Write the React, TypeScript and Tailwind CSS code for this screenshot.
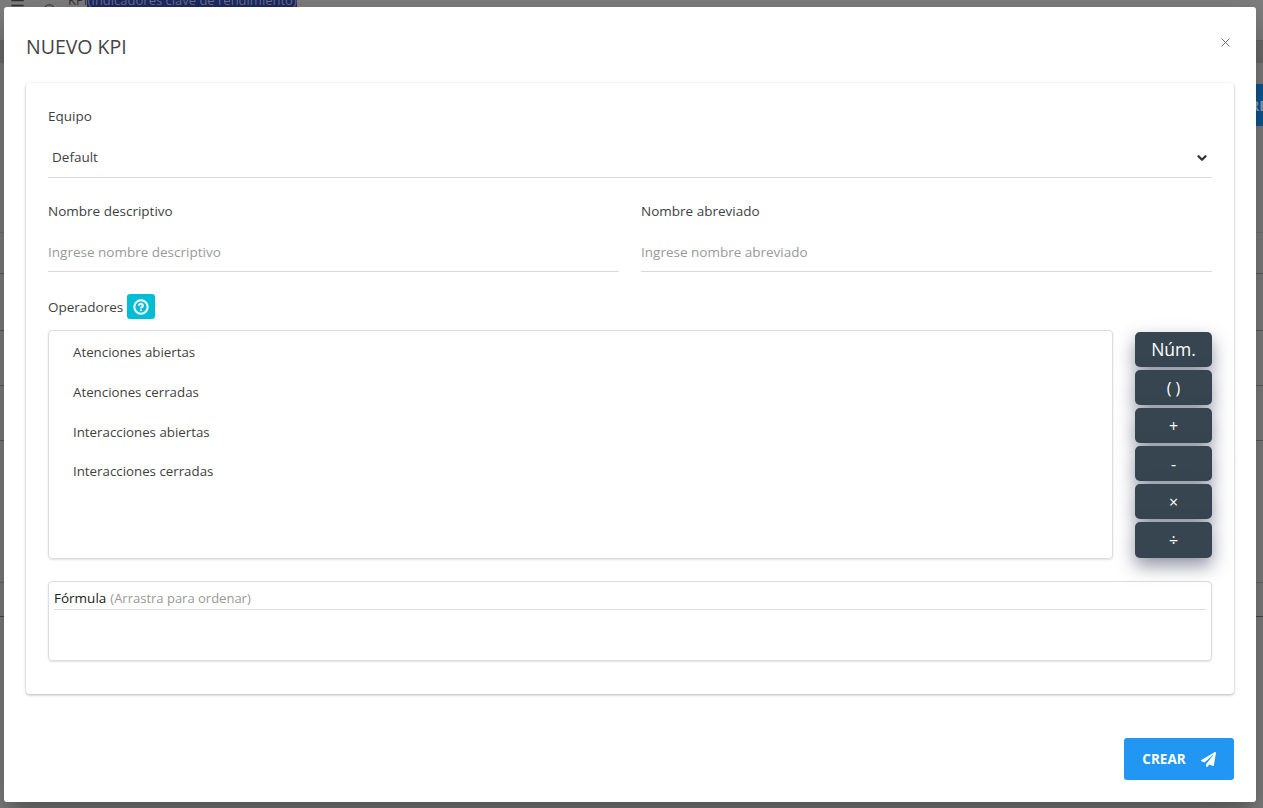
import { ChevronDown, CircleHelp, Menu, Search, X } from "lucide-react"
import { FaPaperPlane } from "react-icons/fa"

const operators = [
  "Atenciones abiertas",
  "Atenciones cerradas",
  "Interacciones abiertas",
  "Interacciones cerradas",
]

const keys = [
  { label: "Núm.", size: "text-[17.5px]", height: "h-[35px]" },
  { label: "( )", size: "text-[16px]", height: "h-[35px]" },
  { label: "+", size: "text-[16px]", height: "h-[35px]" },
  { label: "-", size: "text-[16px]", height: "h-[35px]" },
  { label: "×", size: "text-[16px]", height: "h-[35px]" },
  { label: "÷", size: "text-[16px]", height: "h-[36px]" },
]

const rows = [
  { key: "a", height: "h-[107px]", line: "border-[#757575]" },
  { key: "b", height: "h-[41px]", line: "border-[#5f5f5f]" },
  { key: "c", height: "h-[57px]", line: "border-[#5f5f5f]" },
  { key: "d", height: "h-[55px]", line: "border-[#5f5f5f]" },
  { key: "e", height: "h-[55px]", line: "border-[#5f5f5f]" },
  { key: "f", height: "h-[142px]", line: "border-[#6a6a6a]" },
  { key: "g", height: "h-[34px]", line: "border-[#4a4a4a]" },
]

function Background() {
  return (
    <div className="absolute inset-0 flex flex-col overflow-hidden bg-[#808080]">
      <div className="flex h-[41px] shrink-0 items-start border-b border-[#6a6a6a] pl-[9px] text-[13px] leading-[20px] text-[#333333]">
        <Menu className="-mt-[8px] h-[17px] w-[17px]" />
        <Search className="mt-[3px] ml-[17px] h-[14px] w-[14px]" />
        <div className="-mt-[10px] ml-[11px] flex whitespace-nowrap">
          <span>KPI</span>
          <span className="bg-[#1f2a63] text-[#6a7090]">(Indicadores clave de rendimiento)</span>
        </div>
      </div>
      <div className="h-[22px] shrink-0 bg-[#6e6e6e]" />
      <div className="h-[21px] shrink-0" />
      <div className="flex h-[42px] shrink-0 justify-end">
        <div className="-mr-[23px] flex w-[120px] items-center justify-end bg-[#0f5a96] pr-[23px] text-[14px] font-bold text-[#8ca6bf]">
          <span className="-mr-[23px]">CREAR</span>
        </div>
      </div>
      {rows.map((r) => (
        <div key={r.key} className={`shrink-0 border-b ${r.height} ${r.line}`} />
      ))}
    </div>
  )
}

export default function App() {
  return (
    <div className="relative h-[808px] w-full overflow-hidden font-['Open_Sans',sans-serif]">
      <Background />
      <div className="absolute top-[7px] left-[4px] flex h-[795px] w-[1252px] flex-col rounded-[3px] bg-white shadow-[0_11px_15px_-7px_rgba(0,0,0,0.2),0_24px_38px_3px_rgba(0,0,0,0.14),0_9px_46px_8px_rgba(0,0,0,0.12)]">
        <div className="flex h-[76px] shrink-0 items-start justify-between pr-[23px] pl-[22px]">
          <h2 className="mt-[25px] text-[19.5px] leading-[30px] font-normal text-[#444444]">NUEVO KPI</h2>
          <X className="mt-[28px] h-[15px] w-[15px] text-[#666666]" strokeWidth={1.5} />
        </div>

        <div className="mx-[22px] h-[611px] shrink-0 rounded-[4px] bg-white px-[22px] pt-[23px] shadow-[0_1px_3px_rgba(0,0,0,0.3)]">
          <label className="block text-[13.5px] leading-[20px] text-[#3f3f3f]">Equipo</label>
          <div className="mt-[10px] flex h-[42px] items-center justify-between border-b border-[#d9d9d9] pt-[2px] pr-[3px] pl-[4px] text-[13.5px] text-[#3f3f3f]">
            <span>Default</span>
            <ChevronDown className="h-[14px] w-[14px] text-[#333333]" strokeWidth={4} />
          </div>

          <div className="mt-[23px] grid grid-cols-2 gap-[22px]">
            <div>
              <label className="block text-[13.5px] leading-[20px] text-[#3f3f3f]">Nombre descriptivo</label>
              <div className="mt-[10px] flex h-[41px] items-center border-b border-[#d9d9d9] pt-[3px] text-[13.5px] text-[#999999]">Ingrese nombre descriptivo</div>
            </div>
            <div>
              <label className="block text-[13.5px] leading-[20px] text-[#3f3f3f]">Nombre abreviado</label>
              <div className="mt-[10px] flex h-[41px] items-center border-b border-[#d9d9d9] pt-[3px] text-[13.5px] text-[#999999]">Ingrese nombre abreviado</div>
            </div>
          </div>

          <div className="mt-[22px] flex items-center gap-[4px]">
            <span className="text-[13.5px] leading-[24px] text-[#3f3f3f]">Operadores</span>
            <button className="flex h-[25px] w-[28px] items-center justify-center rounded-[3px] bg-[#00bcd4] text-white">
              <CircleHelp className="h-[16px] w-[16px]" strokeWidth={3} />
            </button>
          </div>

          <div className="mt-[11px] flex gap-[22px]">
            <div className="h-[229px] flex-1 rounded-[4px] border border-[#dddddd] pt-[2.6px] pl-[24px] shadow-[0_1px_2px_rgba(0,0,0,0.12)]">
              {operators.map((op) => (
                <div key={op} className="flex h-[39.6px] items-center text-[13.3px] text-[#3f3f3f]">{op}</div>
              ))}
            </div>
            <div className="flex w-[77px] flex-col gap-[3px] pt-[2px]">
              {keys.map((k) => (
                <button
                  key={k.label}
                  className={`flex items-center justify-center rounded-[5px] bg-[#36454f] text-white shadow-[0_8px_18px_rgba(52,58,90,0.55)] ${k.height} ${k.size}`}
                >
                  {k.label}
                </button>
              ))}
            </div>
          </div>

          <div className="mt-[22px] h-[80px] rounded-[4px] border border-[#dddddd] px-[5px] shadow-[0_1px_2px_rgba(0,0,0,0.12)]">
            <div className="flex h-[28px] items-end gap-[4px] border-b border-[#dddddd] pb-[1px] text-[13.5px]">
              <span className="text-[#222222]">Fórmula</span>
              <span className="text-[13px] text-[#999999]">(Arrastra para ordenar)</span>
            </div>
          </div>
        </div>

        <div className="flex flex-1 justify-end pt-[44px] pr-[22px]">
          <button className="flex h-[42px] w-[110px] items-center justify-center gap-[15px] rounded-[3px] bg-[#2196f3] text-[13.5px] font-bold text-white">
            CREAR
            <FaPaperPlane className="h-[15px] w-[15px]" />
          </button>
        </div>
      </div>
    </div>
  )
}
